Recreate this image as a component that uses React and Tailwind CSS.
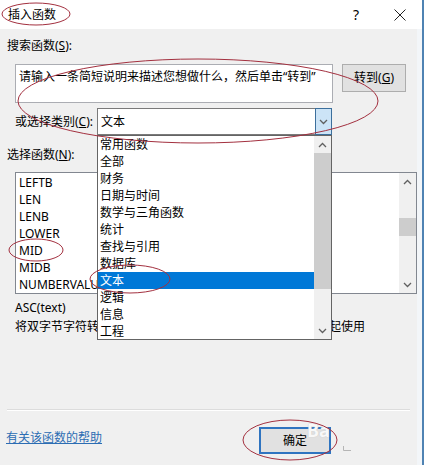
import React from "react";

const ChevUp = () => (
  <svg width="9" height="6" viewBox="0 0 9 6">
    <path d="M1 5 L4.5 1.5 L8 5" fill="none" stroke="#606060" strokeWidth="1.3" />
  </svg>
);
const ChevDown = () => (
  <svg width="9" height="6" viewBox="0 0 9 6">
    <path d="M1 1 L4.5 4.5 L8 1" fill="none" stroke="#606060" strokeWidth="1.3" />
  </svg>
);

const categories = [
  "常用函数",
  "全部",
  "财务",
  "日期与时间",
  "数学与三角函数",
  "统计",
  "查找与引用",
  "数据库",
  "文本",
  "逻辑",
  "信息",
  "工程",
];

const funcs = ["LEFTB", "LEN", "LENB", "LOWER", "MID", "MIDB", "NUMBERVALUE"];

export default function App() {
  return (
    <div className="relative w-[424px] h-[465px] overflow-hidden bg-[#f0f0f0] text-[12px] leading-[16px] text-black flex flex-col border-r-2 border-[#4f83b3] [font-family:'Noto_Sans','Noto_Sans_CJK_SC',sans-serif]">
      {/* title bar */}
      <div className="h-[29px] shrink-0 bg-white flex items-center pl-[8px]">
        <span>插入函数</span>
        <span className="ml-auto text-[14px] leading-[16px]">?</span>
        <span className="ml-[35px] mr-[16px] flex items-center">
          <svg width="12" height="12" viewBox="0 0 12 12">
            <path d="M0.5 0.5 L11.5 11.5 M11.5 0.5 L0.5 11.5" stroke="#222" strokeWidth="1" />
          </svg>
        </span>
      </div>

      {/* body */}
      <div className="flex-1 flex flex-col border-r-[5px] border-[#f3f6f9]">
        <div className="pl-[7px] pt-[9px]">
          搜索函数(<u>S</u>):
        </div>
        <div className="flex pl-[15px] mt-[10px] gap-[9px]">
          <div className="w-[318px] h-[39px] border border-[#abadb3] bg-white pl-[3px] pt-[4px] whitespace-nowrap overflow-hidden">
            请输入一条简短说明来描述您想做什么，然后单击“转到”
          </div>
          <div className="w-[64px] h-[28px] bg-[#e1e1e1] border border-[#adadad] flex items-center justify-center">
            转到(<u>G</u>)
          </div>
        </div>
        <div className="flex items-center pl-[15px] mt-[5px]">
          <span className="w-[82px] whitespace-nowrap">
            或选择类别(<u>C</u>):
          </span>
          <div className="w-[235px] h-[27px] border border-[#7a7a7a] bg-white flex items-center">
            <span className="flex-1 pl-[3px]">文本</span>
            <div className="w-[17px] h-[27px] -my-px -mr-px border border-[#3c6f9c] bg-[#cce4f7] flex items-center justify-center">
              <ChevDown />
            </div>
          </div>
        </div>
        <div className="pl-[7px] mt-[12px]">
          选择函数(<u>N</u>):
        </div>
        <div className="ml-[15px] mt-[9px] w-[402px] h-[122px] border border-[#828790] bg-white flex">
          <div className="flex-1 pt-[1px] pl-[3px]">
            {funcs.map((f) => (
              <div key={f} className="h-[17px] leading-[17px]">
                {f}
              </div>
            ))}
          </div>
          <div className="w-[17px] bg-[#f0f0f0] flex flex-col">
            <div className="h-[17px] flex items-center justify-center">
              <ChevUp />
            </div>
            <div className="h-[28px]" />
            <div className="h-[18px] bg-[#cdcdcd]" />
            <div className="flex-1" />
            <div className="h-[17px] flex items-center justify-center">
              <ChevDown />
            </div>
          </div>
        </div>
        <div className="pl-[15px] mt-[6px]">ASC(text)</div>
        <div className="pl-[15px] mt-[3px] whitespace-nowrap">
          将双字节字符转换成单字节字符。与双字节字符集(DBCS)一起使用
        </div>
        <div className="flex-1" />
        <div className="mx-[7px] h-[2px] border-t border-[#dcdcdc] border-b border-b-white" />
        <div className="h-[54px] shrink-0 flex items-start pt-[16px]">
          <span className="ml-[6px] mt-[3px] text-[#2c6db3] underline">有关该函数的帮助</span>
          <div className="ml-auto mr-[86px] w-[72px] h-[27px] bg-[#e1e1e1] border-2 border-[#2f74c0] flex items-center justify-center">
            确定
          </div>
        </div>
      </div>

      {/* open dropdown list */}
      <div className="absolute left-[97px] top-[135px] w-[235px] h-[205px] bg-white border border-[#646464] flex">
        <div className="flex-1">
          {categories.map((c) => (
            <div
              key={c}
              className={
                c === "文本"
                  ? "h-[17px] leading-[17px] pl-[2px] bg-[#0078d7] text-white"
                  : "h-[17px] leading-[17px] pl-[2px]"
              }
            >
              {c}
            </div>
          ))}
        </div>
        <div className="w-[17px] bg-[#f0f0f0] flex flex-col">
          <div className="h-[17px] flex items-center justify-center">
            <ChevUp />
          </div>
          <div className="h-[136px] bg-[#cdcdcd]" />
          <div className="flex-1" />
          <div className="h-[17px] flex items-center justify-center">
            <ChevDown />
          </div>
        </div>
      </div>

      {/* watermark */}
      <span className="absolute left-[307px] top-[420px] text-[18px] leading-[20px] font-bold text-white/90 [text-shadow:0_0_1px_#bbb]">
        Ba
      </span>

      {/* annotations */}
      <svg className="absolute left-0 top-0 pointer-events-none" width="424" height="465" viewBox="0 0 424 465">
        <g fill="none" stroke="#a3303f" strokeWidth="1">
          <ellipse cx="36" cy="14" rx="34" ry="11" />
          <ellipse cx="198" cy="101" rx="180" ry="42" />
          <ellipse cx="36" cy="250" rx="27" ry="11" />
          <ellipse cx="130" cy="279" rx="40" ry="14" />
          <ellipse cx="290" cy="440" rx="47" ry="20" />
        </g>
        <path d="M343.5 446 V450.5 H351" fill="none" stroke="#b5b5b5" strokeWidth="1" />
      </svg>
    </div>
  );
}
